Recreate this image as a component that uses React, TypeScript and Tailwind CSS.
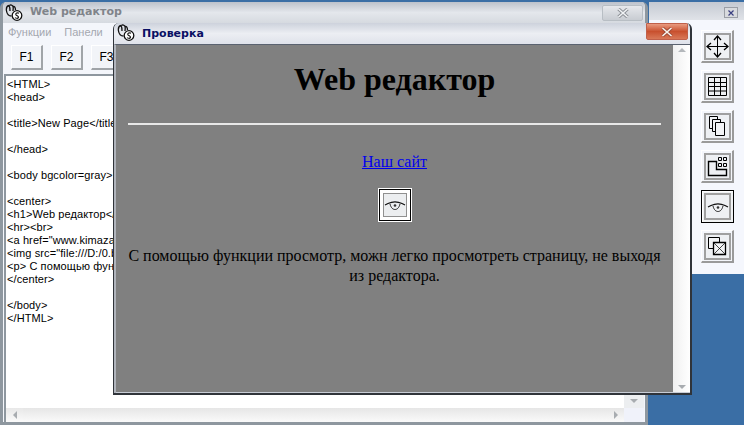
import type { ReactNode } from "react";

const ui = "font-['Liberation_Sans',sans-serif]";

const editorLines = [
  "<HTML>",
  "<head>",
  "",
  "<title>New Page</title>",
  "",
  "</head>",
  "",
  "<body bgcolor=gray>",
  "",
  "<center>",
  "<h1>Web редактор</h1>",
  "<hr><br>",
  '<a href="www.kimazasoft.com">Наш сайт</a>',
  '<img src="file:///D:/0.bmp">',
  "<p> С помощью функции просмотр",
  "</center>",
  "",
  "</body>",
  "</HTML>",
];

function AppLogo() {
  return (
    <svg width="18" height="18" viewBox="0 0 18 18" fill="none" stroke="#111" strokeWidth="1.3">
      <path d="M4 1.5 C2 2 1 4 1.5 7 C2 10 4 12 6.5 12 M4 1.5 C5 3 5 5 5 7 M4.5 1.5 C5.5 0.5 7.5 1 8 2.5 C8.5 4 8 6 8 7 M8 2.5 C9.5 2 10.5 3.5 10.5 6" />
      <circle cx="12" cy="11.5" r="4.8" fill="#fff" />
      <path d="M14 9.2 C12.5 8.3 10.2 9.2 11 10.8 C11.8 12 14 12 13.4 13.6 C12.8 14.6 11 14.4 10 13.6" strokeWidth="1.2" />
    </svg>
  );
}

function CloseGlyph({ outline, fill }: { outline: string; fill: string }) {
  return (
    <svg width="12" height="10" viewBox="0 0 12 10">
      <path d="M1.5 1 L10.5 9 M10.5 1 L1.5 9" stroke={outline} strokeWidth="3.4" />
      <path d="M1.5 1 L10.5 9 M10.5 1 L1.5 9" stroke={fill} strokeWidth="1.6" />
    </svg>
  );
}

function ArrowUp() {
  return <div className="h-0 w-0 border-x-[4px] border-b-[4px] border-x-transparent border-b-[#b4b8bc]" />;
}
function ArrowDown() {
  return <div className="h-0 w-0 border-x-[4px] border-t-[4px] border-x-transparent border-t-[#a8acb0]" />;
}
function ArrowLeft() {
  return <div className="h-0 w-0 border-y-[4px] border-r-[4px] border-y-transparent border-r-[#a8acb0]" />;
}
function ArrowRight() {
  return <div className="h-0 w-0 border-y-[4px] border-l-[4px] border-y-transparent border-l-[#a8acb0]" />;
}

function EyeIcon() {
  return (
    <svg width="22" height="12" viewBox="0 0 22 12" fill="none" stroke="#111">
      <path d="M1 6 L4 4.5 C8 2.6 14 2.6 18 4.5 L21 6" strokeWidth="1.2" />
      <path d="M6 5 C7 9 9 10.5 11 10.5 C13 10.5 15 9 16 5" strokeWidth="0.9" />
      <circle cx="11" cy="6.5" r="1.3" fill="#333" stroke="none" />
    </svg>
  );
}

function ToolButton({ active, children }: { active?: boolean; children: ReactNode }) {
  return (
    <div
      className={
        active
          ? "flex h-[33px] w-[33px] items-center justify-center border border-black bg-[#f0f2f4] shadow-[inset_1px_1px_0_#fff]"
          : "flex h-[33px] w-[33px] items-center justify-center border-t border-l border-t-white border-l-white border-b-2 border-r-2 border-b-[#9a9a9a] border-r-[#9a9a9a] bg-[#f4f6fb]"
      }
    >
      <div className="flex h-[27px] w-[27px] items-center justify-center border-2 border-[#a0a0a0] bg-[#eef0f3]">
        {children}
      </div>
    </div>
  );
}

function MoveIcon() {
  return (
    <svg width="23" height="23" viewBox="0 0 23 23" fill="none" stroke="#000" className="shrink-0">
      <path d="M11.5 1 V22 M1 11.5 H22" />
      <path d="M8 5 L11.5 1 L15 5 M8 18 L11.5 22 L15 18 M5 8 L1 11.5 L5 15 M18 8 L22 11.5 L18 15" strokeWidth="1.3" />
    </svg>
  );
}

function TableIcon() {
  return (
    <svg width="21" height="21" viewBox="0 0 21 21" fill="none" stroke="#000" className="shrink-0">
      <path d="M1.5 1.5 H19.5 V19.5 H1.5 Z M1.5 6.5 H19.5 M1.5 10.5 H19.5 M1.5 15 H19.5 M7.5 1.5 V19.5 M13.5 1.5 V19.5" />
    </svg>
  );
}

function CopyIcon() {
  return (
    <svg width="18" height="20" viewBox="0 0 18 20" fill="#f2f3f5" stroke="#000" className="shrink-0">
      <path d="M1.5 0.5 H9.5 V12.5 H1.5 Z" />
      <path d="M4.5 3.5 H12.5 V15.5 H4.5 Z" />
      <path d="M7.5 6.5 H16.5 V19.5 H7.5 Z" />
    </svg>
  );
}

function PanelsIcon() {
  return (
    <svg width="21" height="21" viewBox="0 0 21 21" fill="none" stroke="#000" className="shrink-0">
      <path d="M1.5 5.5 H9.5 V13.5 H19.5 V19.5 H1.5 Z" strokeWidth="1.4" />
      <path d="M11.5 1.5 H14.5 V4.5 H11.5 Z M16.5 1.5 H19.5 V4.5 H16.5 Z M11.5 7.5 H14.5 V10.5 H11.5 Z M16.5 7.5 H19.5 V10.5 H16.5 Z" />
    </svg>
  );
}

function CellsIcon() {
  return (
    <svg width="20" height="20" viewBox="0 0 20 20" fill="#f2f3f5" stroke="#000" className="shrink-0">
      <path d="M1.5 1.5 H12.5 V12.5 H1.5 Z" />
      <path d="M6.5 6.5 H18.5 V18.5 H6.5 Z" strokeWidth="1.3" />
      <path d="M6.5 6.5 L18.5 18.5 M18.5 6.5 L6.5 18.5" strokeWidth="0.7" />
    </svg>
  );
}

function EditorWindow() {
  return (
    <div className={`absolute left-0 top-[2px] flex h-[423px] w-[648px] flex-col overflow-hidden rounded-t-[6px] border-x-[3px] border-b-[3px] border-x-[#8e979f] border-b-[#8e979f] bg-[#f4f6fb] ${ui}`}>
      <div className="flex h-[21px] shrink-0 items-center gap-[7px] bg-gradient-to-b from-[#bcc2cb] via-[#e4e7ec] to-[#d6dae0] pl-[2px] pr-[2px]">
        <AppLogo />
        <span className="text-[11px] font-bold text-[#80848a] font-['DejaVu_Sans',sans-serif]">Web редактор</span>
        <div className="ml-auto flex h-[16px] w-[41px] items-center justify-center rounded-[2px] border border-[#b8bec4] bg-gradient-to-b from-[#e6e8ec] to-[#c8ccd2]">
          <CloseGlyph outline="#8c9096" fill="#f0f2f4" />
        </div>
      </div>
      <div className="flex h-[19px] shrink-0 items-center gap-[13px] pl-[5px] text-[11px] text-[#a4a8b0]">
        <span>Функции</span>
        <span>Панели</span>
      </div>
      <div className="flex h-[32px] shrink-0 items-start gap-[8px] pl-[8px] pt-[3px]">
        {["F1", "F2", "F3"].map((label) => (
          <div
            key={label}
            className="flex h-[25px] w-[32px] items-center justify-center border-t border-l border-t-white border-l-white border-b-2 border-r-2 border-b-[#a0a4a8] border-r-[#a0a4a8] bg-[#f2f4f8] text-[12px] text-black"
          >
            {label}
          </div>
        ))}
      </div>
      <div className="mx-px flex min-h-0 flex-1 flex-col border-t-2 border-l-2 border-t-[#8e979f] border-l-[#8e979f] bg-white">
        <div className="flex min-h-0 flex-1">
          <div className="flex-1 pl-[1px] pt-[2px] text-[11px] leading-[13px] tracking-[0.1px] whitespace-pre text-black">
            {editorLines.map((line, i) => (
              <div key={i} className="h-[13px]">
                {line}
              </div>
            ))}
          </div>
          <div className="flex w-[20px] flex-col justify-end">
            <div className="flex h-[14px] items-center justify-center bg-[#eceef0]">
              <ArrowDown />
            </div>
          </div>
        </div>
        <div className="flex h-[14px] shrink-0">
          <div className="flex w-[17px] items-center justify-center bg-gradient-to-b from-[#e8e8e8] to-[#fafafa]">
            <ArrowLeft />
          </div>
          <div className="flex flex-1 items-center justify-end bg-gradient-to-b from-[#e6e6e6] to-[#fafafa] pr-[6px]">
            <ArrowRight />
          </div>
          <div className="w-[20px] bg-[#f0f2fa]" />
        </div>
      </div>
    </div>
  );
}

function ToolPalette() {
  return (
    <div className="absolute left-[649px] top-[2px] flex h-[272px] w-[95px] flex-col bg-[#f5f7fd]">
      <div className="flex h-[18px] shrink-0 items-center justify-end bg-gradient-to-b from-[#c4c9d2] to-[#e0e3e8] pr-[6px] pt-[3px]">
        <div className="flex h-[11px] w-[14px] items-center justify-center border border-[#9a9ea6] bg-[#d8dade]">
          <svg width="6" height="6" viewBox="0 0 6 6">
            <path d="M0.5 0.5 L5.5 5.5 M5.5 0.5 L0.5 5.5" stroke="#3a3f80" strokeWidth="1.2" />
          </svg>
        </div>
      </div>
      <div className="flex flex-col items-start gap-[7px] pl-[52px] pt-[10px]">
        <ToolButton>
          <MoveIcon />
        </ToolButton>
        <ToolButton>
          <TableIcon />
        </ToolButton>
        <ToolButton>
          <CopyIcon />
        </ToolButton>
        <ToolButton>
          <PanelsIcon />
        </ToolButton>
        <ToolButton active>
          <EyeIcon />
        </ToolButton>
        <ToolButton>
          <CellsIcon />
        </ToolButton>
      </div>
    </div>
  );
}

function PreviewDialog() {
  return (
    <div className="absolute left-[113px] top-[23px] flex h-[372px] w-[579px] flex-col overflow-hidden rounded-t-[6px] border-b-2 border-l border-r-2 border-b-[#30343a] border-l-[#30343a] border-r-[#30343a] bg-[#c8cdd6]">
      <div className={`flex h-[21px] shrink-0 items-start gap-[7px] bg-gradient-to-b from-[#cdd2dc] via-[#eceef3] to-[#dfe2ea] pl-[3px] pr-[2px] ${ui}`}>
        <div className="pt-px">
          <AppLogo />
        </div>
        <span className="pt-[4px] text-[11px] leading-[14px] font-bold text-[#0a1064] font-['DejaVu_Sans',sans-serif]">Проверка</span>
        <div className="ml-auto flex h-[17px] w-[42px] items-center justify-center rounded-b-[2px] border border-[#c0604a] bg-gradient-to-b from-[#e89a80] via-[#c8502e] to-[#d87858]">
          <CloseGlyph outline="#a04a36" fill="#f8f4ee" />
        </div>
      </div>
      <div className="flex min-h-0 flex-1 border-t border-l-2 border-t-[#5a6270] border-l-[#b0b4bc] pb-px">
        <div className="flex min-w-0 flex-1 flex-col items-center bg-[#808080] px-[12px] pt-[16px] font-['Liberation_Serif',serif] text-black">
          <h1 className="text-[32px] leading-[37px] font-bold">Web редактор</h1>
          <div className="mt-[25px] h-[2px] w-full bg-[#e8e8e8]" />
          <a className="mt-[28px] text-[16px] leading-[18px] text-[#0000ee] underline">Наш сайт</a>
          <div className="mt-[17px] flex h-[34px] w-[34px] items-center justify-center border border-white bg-black p-px">
            <div className="flex h-full w-full items-center justify-center bg-white p-[3px]">
              <div className="flex h-full w-full items-center justify-center border border-[#909090] bg-[#eceef0]">
                <EyeIcon />
              </div>
            </div>
          </div>
          <p className="mt-[24px] text-center text-[16px] leading-[20px]">
            С помощью функции просмотр, можн легко просмотреть страницу, не выходя из редактора.
          </p>
        </div>
        <div className="flex w-[17px] shrink-0 flex-col items-center justify-between bg-gradient-to-r from-[#f0f0f0] to-white py-[3px]">
          <ArrowUp />
          <ArrowDown />
        </div>
      </div>
    </div>
  );
}

export default function App() {
  return (
    <div className="relative h-[425px] w-[744px] overflow-hidden bg-[#3a6ea5]">
      <ToolPalette />
      <EditorWindow />
      <PreviewDialog />
    </div>
  );
}
